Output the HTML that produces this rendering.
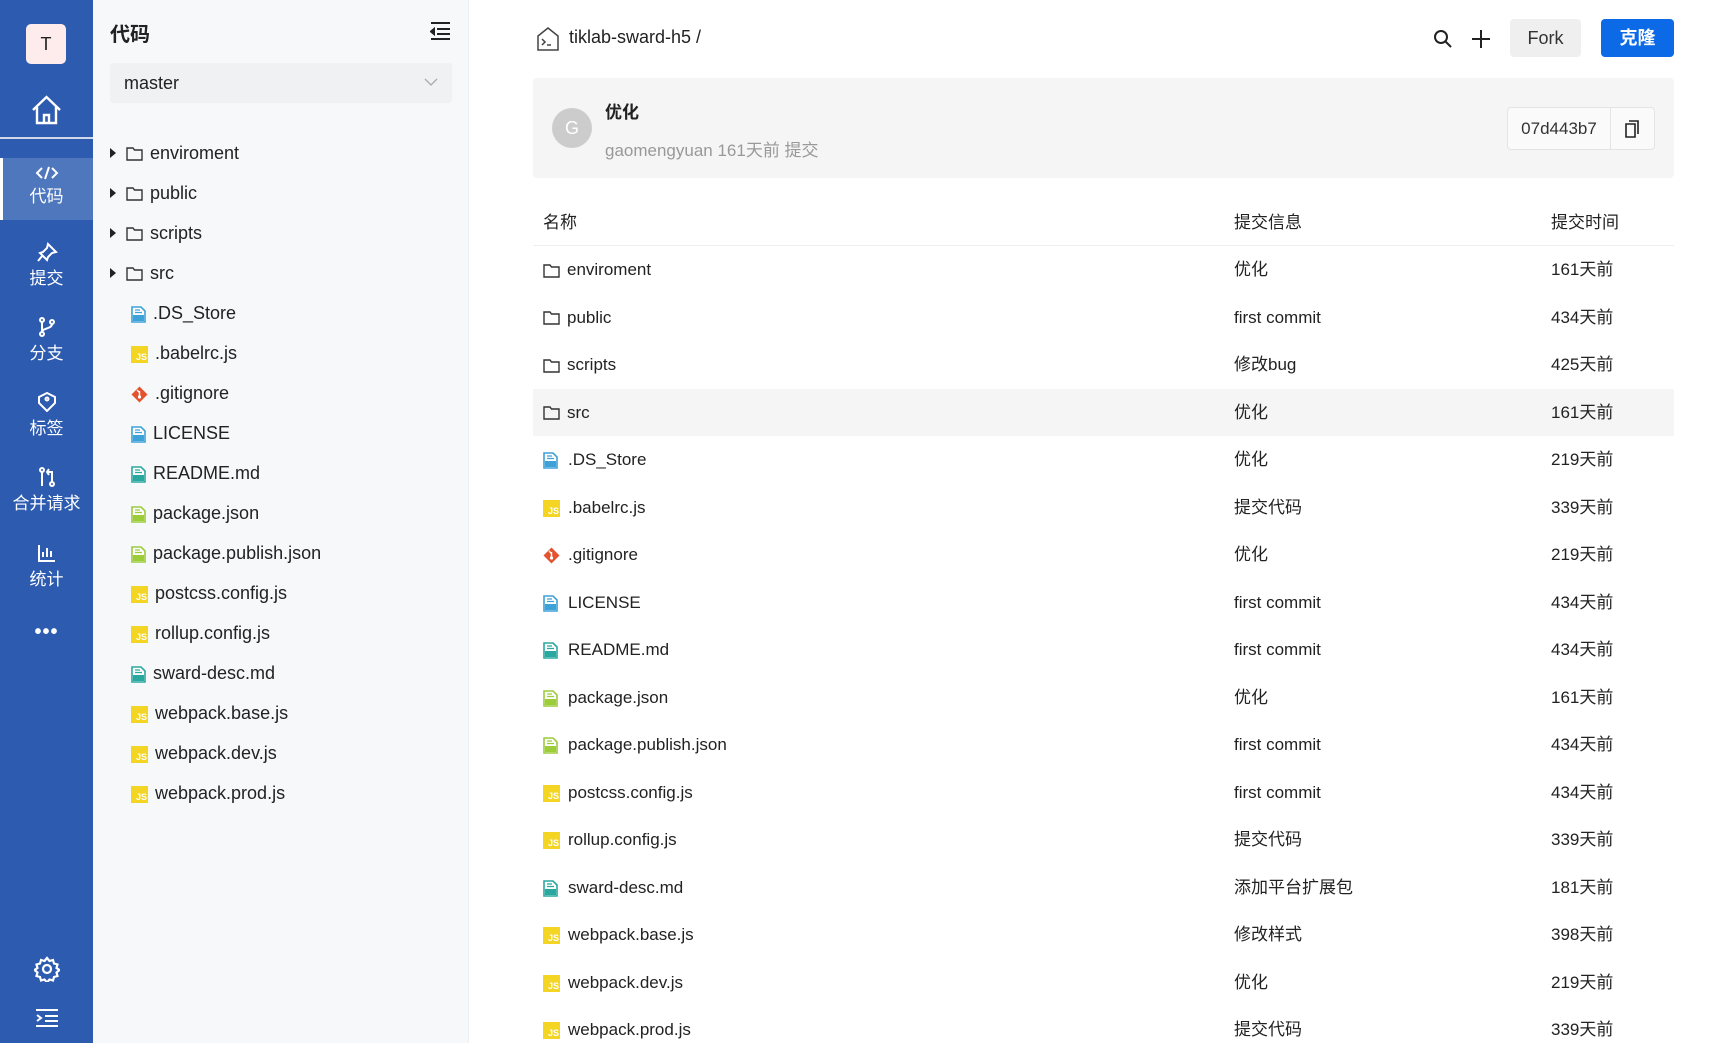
<!DOCTYPE html>
<html><head><meta charset="utf-8"><style>
*{box-sizing:border-box;margin:0;padding:0}
body{width:1730px;height:1043px;overflow:hidden;font-family:"Liberation Sans","Noto Sans CJK SC",sans-serif;color:#222;background:#fff;position:relative;font-size:17px}
.nav{position:absolute;left:0;top:0;width:93px;height:1043px;background:#2d5bb0;color:#fff}
.av{position:absolute;left:26px;top:24px;width:40px;height:40px;background:#fdeceb;border-radius:5px;color:#222;text-align:center;line-height:40px;font-size:18px}
.ni{position:absolute;left:0;width:93px;text-align:center;font-size:17px}
.ni svg{display:block;margin:0 auto 2px}
.tree{position:absolute;left:93px;top:0;width:376px;height:1043px;background:#f6f8fa;border-right:1px solid #eceef1}
.tr{position:absolute;left:0;height:40px;line-height:40px;font-size:18px;white-space:nowrap}
.row{position:absolute;left:533px;width:1141px;height:47.5px;line-height:47.5px;font-size:17px}
.row>span{position:absolute}
.ic{display:inline-block;vertical-align:middle}
</style></head><body>
<div class="nav">
 <div class="av">T</div>
 <svg style="position:absolute;left:31px;top:95px" width="31" height="30" viewBox="0 0 31 30" fill="none" stroke="#fff" stroke-width="2.4"><path d="M2 15L15.5 2 29 15M6 12v16h19V12M13 28v-8h5v8"/></svg>
 <div style="position:absolute;left:0;top:137px;width:93px;height:2px;background:#d0d8ea"></div>
 <div style="position:absolute;left:3px;top:158px;width:90px;height:62px;background:#4f77be"></div>
 <div style="position:absolute;left:0;top:158px;width:3px;height:62px;background:#fff"></div>
 <div class="ni" style="top:166px"><svg width="24" height="14" viewBox="0 0 24 14" fill="none" stroke="#fff" stroke-width="2"><path d="M7 2L2 7l5 5M17 2l5 5-5 5M14 1l-4 12"/></svg>代码</div>
 <div class="ni" style="top:242px"><svg width="22" height="20" viewBox="0 0 22 20" fill="none" stroke="#fff" stroke-width="2"><path d="M12 2l8 8-4 1-4 4-1 3-7-7 3-1 4-4zM7 13l-5 6"/></svg>提交</div>
 <div class="ni" style="top:317px"><svg width="20" height="20" viewBox="0 0 20 20" fill="none" stroke="#fff" stroke-width="2"><circle cx="5" cy="3" r="2"/><circle cx="5" cy="17" r="2"/><circle cx="15" cy="5" r="2"/><path d="M5 5v10M15 7c0 5-10 4-10 8"/></svg>分支</div>
 <div class="ni" style="top:392px"><svg width="20" height="20" viewBox="0 0 20 20" fill="none" stroke="#fff" stroke-width="2"><path d="M10 1l8 4v6l-8 8-8-8V5z"/><circle cx="10" cy="7" r="1.5"/></svg>标签</div>
 <div class="ni" style="top:467px"><svg width="20" height="20" viewBox="0 0 20 20" fill="none" stroke="#fff" stroke-width="2"><circle cx="5" cy="3" r="2"/><circle cx="15" cy="17" r="2"/><path d="M5 5v14M15 15V5h-5M12 2l-2 3 2 3"/></svg>合并请求</div>
 <div class="ni" style="top:543px"><svg width="20" height="20" viewBox="0 0 20 20" fill="none" stroke="#fff" stroke-width="2"><path d="M2 2v16h16M6 14V9M10 14V5M14 14V8"/></svg>统计</div>
 <div class="ni" style="top:621px;font-size:20px;font-weight:bold;letter-spacing:1px">•••</div>
 <svg style="position:absolute;left:34px;top:956px" width="26" height="26" viewBox="0 0 26 26" fill="none" stroke="#fff" stroke-width="2.2"><circle cx="13" cy="13" r="4"/><path d="M13 2l2.5 3 3.5-1 1 3.5 3.5 1-1 3.5 3 2-3 2.5 1 3.5-3.5 1-1 3.5-3.5-1-2.5 3-2.5-3-3.5 1-1-3.5-3.5-1 1-3.5-3-2.5 3-2-1-3.5 3.5-1 1-3.5 3.5 1z"/></svg>
 <svg style="position:absolute;left:35px;top:1008px" width="24" height="20" viewBox="0 0 24 20" fill="none" stroke="#fff" stroke-width="2"><path d="M1 2h22M10 8h13M10 13h13M1 18h22M2 7l4 3-4 3"/></svg>
</div>
<div class="tree">
 <div style="position:absolute;left:17px;top:18px;font-size:20px;font-weight:bold">代码</div>
 <svg style="position:absolute;left:337px;top:22px" width="20" height="18" viewBox="0 0 20 18" fill="none" stroke="#222" stroke-width="2"><path d="M1 1h19M7 7h13M7 12h13M1 17h19"/><path d="M1 9.5l3-2.5v5z" fill="#222"/></svg>
 <div style="position:absolute;left:17px;top:63px;width:342px;height:40px;background:#f0f1f3;border-radius:3px;line-height:40px;padding-left:14px;font-size:18px">master<svg style="position:absolute;right:14px;top:14px" width="14" height="10" viewBox="0 0 14 10" fill="none" stroke="#aaa" stroke-width="1.3"><path d="M1 2l6 6 6-6"/></svg></div>
 <div id="tl"></div>
</div>
<svg style="position:absolute;left:537px;top:27px" width="22" height="24" viewBox="0 0 22 24" fill="none" stroke="#444" stroke-width="1.5"><path d="M1 9L11 1l10 8v14H1z"/><path d="M5 12l3 3-3 3M10 18h4"/></svg>
<div style="position:absolute;left:569px;top:27px;font-size:18px">tiklab-sward-h5 /</div>
<svg style="position:absolute;left:1433px;top:29px" width="20" height="20" viewBox="0 0 20 20" fill="none" stroke="#222" stroke-width="2"><circle cx="8" cy="8" r="6"/><path d="M12.5 12.5L18 18"/></svg>
<svg style="position:absolute;left:1471px;top:29px" width="20" height="20" viewBox="0 0 20 20" fill="none" stroke="#222" stroke-width="2"><path d="M10 1v18M1 10h18"/></svg>
<div style="position:absolute;left:1510px;top:19px;width:71px;height:38px;background:#efefef;border-radius:4px;text-align:center;line-height:38px;font-size:18px;color:#333">Fork</div>
<div style="position:absolute;left:1601px;top:19px;width:73px;height:38px;background:#0d6ae6;border-radius:4px;text-align:center;line-height:38px;font-size:18px;color:#fff;font-weight:bold">克隆</div>
<div style="position:absolute;left:533px;top:78px;width:1141px;height:100px;background:#f5f5f5;border-radius:4px">
 <div style="position:absolute;left:19px;top:30px;width:40px;height:40px;border-radius:50%;background:#ccc;color:#fff;text-align:center;line-height:40px;font-size:18px">G</div>
 <div style="position:absolute;left:72px;top:20px;font-weight:bold;font-size:17px">优化</div>
 <div style="position:absolute;left:72px;top:58px;color:#999;font-size:17px">gaomengyuan 161天前 提交</div>
 <div style="position:absolute;left:974px;top:29px;width:148px;height:43px;border:1px solid #e4e4e4;border-radius:4px;background:#fafafa">
  <div style="position:absolute;left:0;top:0;width:103px;height:41px;line-height:41px;text-align:center;border-right:1px solid #e4e4e4;color:#333">07d443b7</div>
  <svg style="position:absolute;left:117px;top:12px" width="14" height="18" viewBox="0 0 14 18" fill="none" stroke="#222" stroke-width="1.6"><path d="M4 1h9v13M1 4h9v13H1z"/></svg>
 </div>
</div>
<div class="row" style="top:200px;border-bottom:1px solid #eee;height:46px;line-height:46px"><span style="left:10px">名称</span><span style="left:701px">提交信息</span><span style="left:1018px">提交时间</span></div>
<div id="rows"></div>
<script>
var F='<svg class="ic" width="17" height="14" viewBox="0 0 17 14" fill="none" stroke="#333" stroke-width="1.4"><path d="M1 1h6l1.5 2H16v10H1z"/></svg>';
function ic(t){
 if(t=='js')return '<span class="ic" style="width:17px;height:17px;background:#f5d524;color:#fff;font-size:9px;line-height:22px;text-align:right;padding-right:1px;font-weight:bold">JS</span>';
 if(t=='git')return '<svg class="ic" width="17" height="17" viewBox="0 0 17 17"><path d="M8.5 0.5l8 8-8 8-8-8z" fill="#e4532f"/><circle cx="8.5" cy="11" r="1.6" fill="#fff"/><path d="M8.5 5v6M6 4l2.5 2.5" stroke="#fff" stroke-width="1.4"/></svg>';
 var c={doc:'#3ea1d8',md:'#2aa8a0',json:'#9ccc3a'}[t];
 return '<svg class="ic" width="15" height="17" viewBox="0 0 15 17"><path d="M1 1h9l4 4v11H1z" fill="#fff" stroke="'+c+'" stroke-width="1.6"/><rect x="2" y="9" width="11" height="6" fill="'+c+'"/><path d="M4 4h5M4 6.5h7" stroke="'+c+'" stroke-width="1.2"/></svg>';
}
var d=[['enviroment','f','优化','161'],['public','f','first commit','434'],['scripts','f','修改bug','425'],['src','f','优化','161'],['.DS_Store','doc','优化','219'],['.babelrc.js','js','提交代码','339'],['.gitignore','git','优化','219'],['LICENSE','doc','first commit','434'],['README.md','md','first commit','434'],['package.json','json','优化','161'],['package.publish.json','json','first commit','434'],['postcss.config.js','js','first commit','434'],['rollup.config.js','js','提交代码','339'],['sward-desc.md','md','添加平台扩展包','181'],['webpack.base.js','js','修改样式','398'],['webpack.dev.js','js','优化','219'],['webpack.prod.js','js','提交代码','339']];
var h='',t='';
d.forEach(function(r,i){
 var I=r[1]=='f'?F:ic(r[1]);
 var m=r[1]=='f'?7:(r[1]=='doc'||r[1]=='md'||r[1]=='json'?10:8);
 h+='<div class="row" style="top:'+(246+i*47.5)+'px;'+(i==3?'background:#f5f5f5':'')+'"><span style="left:10px">'+I+'<span style="margin-left:'+m+'px">'+r[0]+'</span></span><span style="left:701px">'+r[2]+'</span><span style="left:1018px">'+r[3]+'天前</span></div>';
 t+='<div class="tr" style="top:'+(133+i*40)+'px;left:'+(r[1]=='f'?17:38)+'px">'+(r[1]=='f'?'<span style="display:inline-block;width:0;height:0;border-left:6px solid #222;border-top:5px solid transparent;border-bottom:5px solid transparent;margin-right:10px;vertical-align:1px"></span>'+F:I)+'<span style="margin-left:7px">'+r[0]+'</span></div>';
});
document.getElementById('rows').innerHTML=h;
document.getElementById('tl').innerHTML=t;
</script>
</body></html>
